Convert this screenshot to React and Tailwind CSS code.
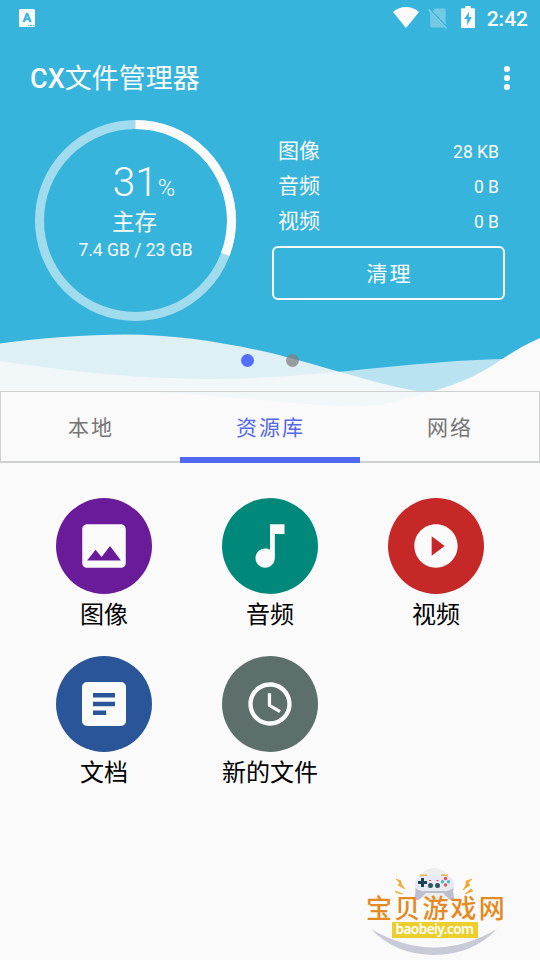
import { MdImage, MdMusicNote, MdPlayCircleFilled, MdAccessTime } from 'react-icons/md'

const usage = [
  { name: '图像', size: '28 KB' },
  { name: '音频', size: '0 B' },
  { name: '视频', size: '0 B' },
]

const tabs = ['本地', '资源库', '网络']

const library = [
  { name: '图像', color: 'bg-[#6a1b9a]', icon: <MdImage className="size-[58px]" /> },
  { name: '音频', color: 'bg-[#00897b]', icon: <MdMusicNote className="size-[58px]" /> },
  { name: '视频', color: 'bg-[#c62828]', icon: <MdPlayCircleFilled className="size-[52px]" /> },
  { name: '文档', color: 'bg-[#2a5699]', icon: <DocIcon /> },
  { name: '新的文件', color: 'bg-[#5c6f6a]', icon: <MdAccessTime className="size-[52px]" /> },
]

function DocIcon() {
  return (
    <svg width="44" height="44" viewBox="0 0 44 44">
      <rect width="44" height="44" rx="5" fill="#fafafa" />
      <path d="M11 11h22v4.4H11zM11 19.8h22v4.4H11zM11 28.6h13.2V33H11z" fill="#2a5699" />
    </svg>
  )
}

function StatusBar() {
  return (
    <div className="h-9 flex items-center pl-[19px] pr-[12px]">
      {/* 输入法图标 */}
      <div className="relative w-4 h-[18px] rounded-[1.5px] bg-[#fafafa] text-[#36b4dc] text-[13px] leading-[17px] font-black text-center">
        A
        <div className="absolute right-[1px] bottom-[1px] flex gap-[1px]">
          <i className="w-[1.5px] h-[1.5px] bg-[#36b4dc]" />
          <i className="w-[1.5px] h-[1.5px] bg-[#36b4dc]" />
          <i className="w-[1.5px] h-[1.5px] bg-[#36b4dc]" />
        </div>
      </div>
      <svg className="ml-auto -mt-[1px]" width="26" height="21" viewBox="0 0 26 21">
        <path d="M0 5C7.5-1.6 18.500-1.600 26 5L13 21z" fill="#fafafa" />
      </svg>
      <svg className="ml-[9px]" width="20" height="21" viewBox="0 0 20 21">
        <path d="M7 .5h9.500q1.200 0 1.200 1.200v15L4.800 3.200zM2.200 4.500L16 19.500H3.700q-1.500 0-1.500-1.500z" fill="#fafafa" opacity=".32" />
        <path d="M.6 1.500L18.500 20.500" stroke="#fafafa" strokeWidth="1.600" opacity=".4" />
      </svg>
      <svg className="ml-[13px] -mt-[2px]" width="14" height="22" viewBox="0 0 14 22">
        <path d="M4.300 0h5.400v2.300H13q1 0 1 1V21q0 1-1 1H1q-1 0-1-1V3.300q0-1 1-1h3.300z" fill="#fafafa" />
        <path d="M8.200 5.500L3.200 13h3v6.200l4.600-8.200H7.700z" fill="#36b4dc" />
      </svg>
      <span className="ml-[12px] pt-[3px] text-[21px] font-medium">2:42</span>
    </div>
  )
}

function StorageRing() {
  const length = 2 * Math.PI * 96
  return (
    <div className="relative size-[201px]">
      <svg className="absolute inset-0 -rotate-90" width="201" height="201">
        <circle cx="100.5" cy="100.5" r="96" fill="none" stroke="#a1dcee" strokeWidth="9" />
        <circle
          cx="100.5"
          cy="100.5"
          r="96"
          fill="none"
          stroke="#fafafa"
          strokeWidth="9"
          strokeDasharray={`${length * 0.307} ${length}`}
        />
      </svg>
      <div className="relative flex flex-col items-center">
        <div className="mt-[39px] pl-[17px] h-[46px] leading-[46px] font-light">
          <span className="text-[40.5px]">31</span>
          <span className="text-[23.5px]">%</span>
        </div>
        <div className="h-8 mt-[1px] pr-[2px] text-[22.5px] leading-8">主存</div>
        <div className="h-6 text-[17.5px] leading-6">7.4 GB / 23 GB</div>
      </div>
    </div>
  )
}

function Waves() {
  return (
    <svg className="absolute left-0 top-[330px]" width="540" height="132" viewBox="0 330 540 132">
      <path d="M0 343.500C40 338 85 334.500 125 334.500C175 334.500 225 342.500 270 352.800C325 366 375 385 428 393V462H0z" fill="#dff0f5" />
      <path d="M0 361C60 370 130 379 215 379C310 379 410 361 502 359L540 350V462H0z" fill="#fafafa" opacity=".67" />
      <path d="M0 391H140C190 393 245 399 275 401C330 407 372 408 395 402C408 399 418 395 428 393C470 380 485 371 502 359C515 351 526 344 540 338V462H0z" fill="#fafafa" />
    </svg>
  )
}

function Watermark() {
  return (
    <div className="absolute left-[364px] top-[864px] w-[144px] h-[92px] flex flex-col items-center">
      <svg className="absolute inset-0" width="144" height="92" viewBox="364 864 144 92">
        <circle cx="434" cy="885" r="17" fill="#ededed" />
        <path d="M371 929Q434 966 497 929Q472 955 434 955Q396 955 371 929z" fill="#c8cad8" />
        <path d="M396 879l5 2 0 3 4 5-7-4 2-2zM395 891l8 3-6-1zM472 879l-6 2 0 4-3 5 7-5-2-2zM473 891l-8 3 6-5z" fill="#eda92c" stroke="#eda92c" strokeWidth=".7" />
        <path d="M420 877v-2.500h7v2.500zM441 877v-2.500h7v2.500z" fill="#e8b64c" />
        <path d="M415 883q0-7 8-7h22q8 0 9 7c0 5-1 6-1 8 1 3 1 5 1 8q-4 3-7-2l-4-6h-17l-4 6q-4 5-8 2 0-4 1-8c0-2 0-4 0-8z" fill="#e9e9f1" />
        <path d="M415.500 888q4 4 9 3h19q5 1 10-3l-.5 4 1 7q-4 3-7-2l-4-4h-17l-4 4q-4 5-7.500 2l1-6z" fill="#bcbecd" />
        <path d="M421 878h3v3h3v3h-3v3h-3v-3h-3v-3h3z" fill="#1d4352" />
        <circle cx="430.500" cy="885.500" r="2.500" fill="#2d5563" />
        <circle cx="437.500" cy="885.500" r="2.500" fill="#2d5563" />
        <circle cx="445.500" cy="878.500" r="1.700" fill="#e05060" />
        <circle cx="445.500" cy="885" r="1.700" fill="#e05060" />
        <circle cx="442.500" cy="881.700" r="1.700" fill="#4cb6c4" />
        <circle cx="448.500" cy="881.700" r="1.700" fill="#4cb6c4" />
        <path d="M429 880h2v1h-2zM436.500 880h2v1h-2z" fill="#d8405c" />
      </svg>
      <div className="relative mt-[32px] text-[26px] leading-[26px] tracking-[2.200px] pl-[1px] whitespace-nowrap text-[#e38a22] font-medium">宝贝游戏网</div>
      <div className="relative mr-[3px] h-[16px] w-[86px] bg-[#ebcf2c] text-white text-center text-[13.500px] leading-[15px] font-['Noto_Sans',sans-serif] font-semibold tracking-[-0.5px]">baobeiy.com</div>
    </div>
  )
}

function App() {
  return (
    <div className="relative w-[540px] h-[960px] overflow-hidden bg-[#fafafa] font-['Roboto','Noto_Sans_CJK_SC',sans-serif] text-[#fafafa]">
      {/* 顶部背景 */}
      <div className="absolute inset-x-0 top-0 h-[391px] bg-[#36b4dc]" />
      <Waves />

      <div className="relative">
        <StatusBar />
        <header className="h-[84px] pl-[30px] pr-[29px] flex items-center justify-between">
          <h1 className="pt-[2px] text-[27px] font-medium">
            CX<span className="font-normal">文件管理器</span>
          </h1>
          <svg className="overflow-visible" width="8" height="24" viewBox="0 0 8 24" fill="#fafafa">
            <circle cx="4" cy="3" r="3.100" />
            <circle cx="4" cy="12" r="3.100" />
            <circle cx="4" cy="21" r="3.100" />
          </svg>
        </header>

        <section className="h-[271px] pl-[35px] pr-[35px] flex items-start justify-between">
          <StorageRing />
          <div className="w-[233px] pt-[14px]">
            {usage.map((item) => (
              <div key={item.name} className="h-[35px] pl-1.5 pr-1.5 flex items-center justify-between">
                <span className="pt-[1px] text-[21px]">{item.name}</span>
                <span className="pt-[2px] text-[17.5px]">{item.size}</span>
              </div>
            ))}
            <button className="mt-[7px] pt-[3px] pl-[2px] w-full h-[54px] border-2 border-[#fafafa] rounded-[6px] text-[21px] tracking-[2px]">
              清理
            </button>
          </div>
        </section>

        {/* 翻页指示点 */}
        <div className="absolute left-[241px] top-[354px] flex gap-8">
          <i className="size-[13px] rounded-full bg-[#536dfe]" />
          <i className="size-[13px] rounded-full bg-[#808080]/75" />
        </div>

        <nav className="relative h-[72px] grid grid-cols-[179px_180px_179px] border border-b-2 border-[#cfd1d0]">
          {tabs.map((tab) => (
            <div
              key={tab}
              className={`flex items-center justify-center text-[21px] tracking-[2px] pt-[5px] pl-[1px] last:pl-[3px] ${
                tab === '资源库' ? 'text-[#5468e8]' : 'text-[#757575]'
              }`}
            >
              {tab}
            </div>
          ))}
          {/* 选中标签下划线 */}
          <div className="absolute left-[179px] -bottom-[2px] w-[180px] h-1.5 bg-[#5068f0]" />
        </nav>

        <main className="pt-[35px] px-[21px] grid grid-cols-3">
          {library.map((item) => (
            <div key={item.name} className="h-[158px] flex flex-col items-center text-[#fafafa]">
              <div className={`size-24 rounded-full flex items-center justify-center ${item.color}`}>{item.icon}</div>
              <span className="mt-[3px] text-[24px] leading-9 text-black">{item.name}</span>
            </div>
          ))}
        </main>
      </div>

      <Watermark />
    </div>
  )
}

export default App
